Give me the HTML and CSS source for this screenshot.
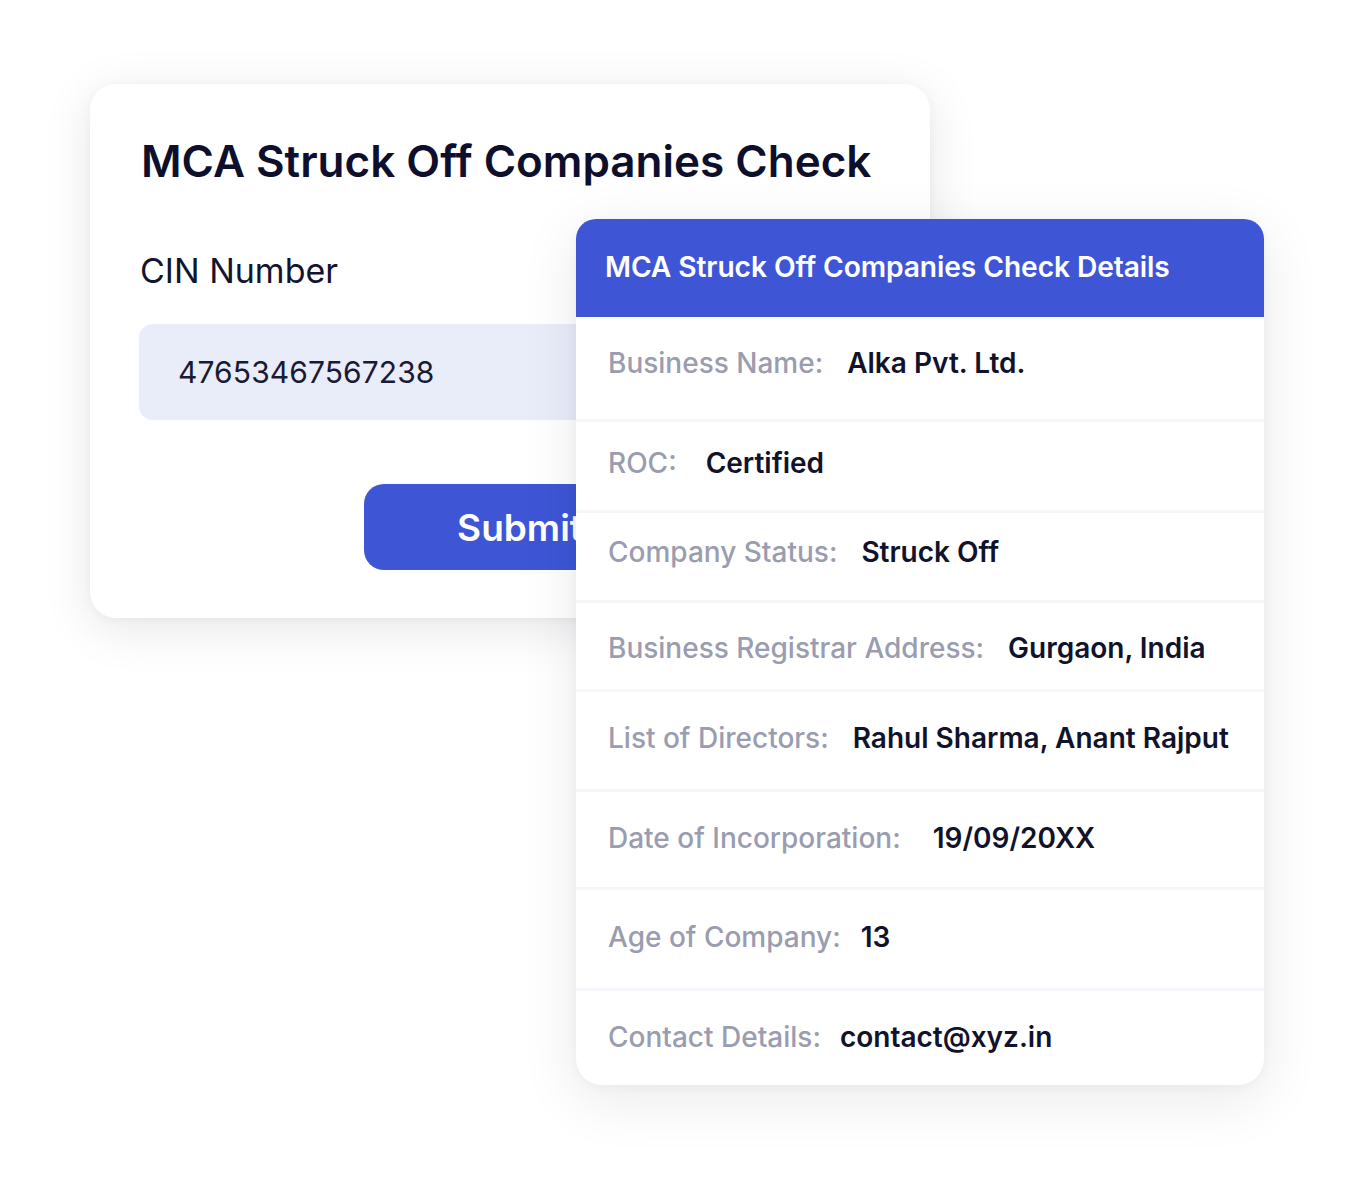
FILE: index.html
```html
<!DOCTYPE html>
<html lang="en">
<head>
<meta charset="utf-8">
<title>MCA Struck Off Companies Check</title>
<link rel="stylesheet" href="styles.css">
</head>
<body>
<div class="stage">
  <section class="form-card">
    <h1 class="form-title">MCA Struck Off Companies Check</h1>
    <label class="field-label" for="cin">CIN Number</label>
    <div class="field-input" id="cin">47653467567238</div>
    <div class="actions">
      <button class="submit-btn" type="button">Submit</button>
    </div>
  </section>

  <section class="details-card">
    <header class="details-header">MCA Struck Off Companies Check Details</header>
    <div class="details-list">
      <div class="row"><span class="label">Business Name:</span><span class="value">Alka Pvt. Ltd.</span></div>
      <div class="row"><span class="label">ROC:</span><span class="value">Certified</span></div>
      <div class="row"><span class="label">Company Status:</span><span class="value">Struck Off</span></div>
      <div class="row"><span class="label">Business Registrar Address:</span><span class="value">Gurgaon, India</span></div>
      <div class="row"><span class="label">List of Directors:</span><span class="value">Rahul Sharma, Anant Rajput</span></div>
      <div class="row"><span class="label">Date of Incorporation:</span><span class="value">19/09/20XX</span></div>
      <div class="row"><span class="label">Age of Company:</span><span class="value">13</span></div>
      <div class="row"><span class="label">Contact Details:</span><span class="value">contact@xyz.in</span></div>
    </div>
  </section>
</div>
</body>
</html>
```

FILE: styles.css
```css
* { box-sizing: border-box; }

html, body {
  margin: 0;
  padding: 0;
  background: #ffffff;
}

body {
  font-family: Inter, "Noto Sans", "Liberation Sans", sans-serif;
  color: #0f1030;
}

.stage {
  display: grid;
  padding: 84px 0 0 90px;
  width: 1354px;
  height: 1182px;
}

.form-card {
  grid-area: 1 / 1;
  align-self: start;
  width: 840px;
  background: #ffffff;
  border-radius: 26px;
  padding: 51px 49px 48px 52px;
  box-shadow: 0 10px 50px rgba(20, 20, 40, 0.10), 0 2px 10px rgba(20, 20, 40, 0.04);
  display: flex;
  flex-direction: column;
}

.form-title {
  margin: 0;
  font-size: 44px;
  line-height: 53px;
  font-weight: 600;
  color: #0d0f2c;
  letter-spacing: 0;
  margin-left: -1px;
}

.field-label {
  margin-top: 62px;
  margin-left: -2px;
  font-size: 34px;
  line-height: 41px;
  font-weight: 400;
  color: #13142f;
}

.field-input {
  margin-top: 33px;
  margin-left: -3px;
  height: 96px;
  background: #e9ecf9;
  border-radius: 14px;
  display: flex;
  align-items: center;
  padding-left: 39px;
  font-size: 30px;
  color: #191a33;
  letter-spacing: 0.1px;
}

.actions {
  margin-top: 64px;
  display: flex;
  justify-content: center;
}

.submit-btn {
  width: 312px;
  height: 86px;
  border: none;
  border-radius: 20px;
  background: #3e56d6;
  color: #ffffff;
  font-family: inherit;
  font-size: 37px;
  font-weight: 600;
  margin-left: 17px;
  padding: 0;
}

.details-card {
  grid-area: 1 / 1;
  align-self: start;
  margin: 135px 0 0 486px;
  width: 688px;
  background: #ffffff;
  border-radius: 20px 20px 26px 26px;
  overflow: hidden;
  box-shadow: 0 14px 60px rgba(20, 20, 40, 0.09), 0 2px 12px rgba(20, 20, 40, 0.04);
}

.details-header {
  height: 98px;
  background: #3e56d6;
  color: #ffffff;
  display: flex;
  align-items: center;
  padding: 0 0 2px 29px;
  font-size: 28.2px;
  font-weight: 600;
  letter-spacing: -0.1px;
}

.details-list {
  display: flex;
  flex-direction: column;
}

.row {
  display: flex;
  align-items: center;
  gap: 24px;
  padding-left: 32px;
  font-size: 28px;
  font-weight: 500;
  border-top: 3px solid #f5f6fa;
}

.row:first-child { border-top: none; height: 102px; padding-bottom: 10px; }
.row:nth-child(2) { height: 91px; padding-bottom: 6px; gap: 29px; }
.row:nth-child(3) { height: 90px; padding-bottom: 9px; }
.row:nth-child(4) { height: 89px; padding-top: 4px; }
.row:nth-child(5) { height: 100px; padding-bottom: 6px; }
.row:nth-child(6) { height: 98px; padding-bottom: 4px; gap: 32px; }
.row:nth-child(7) { height: 101px; padding-bottom: 4px; gap: 20px; }
.row:nth-child(8) { height: 97px; padding-bottom: 2px; gap: 19px; }

.label {
  color: #9a9cb0;
}

.value {
  color: #11122c;
  font-weight: 600;
}
```
